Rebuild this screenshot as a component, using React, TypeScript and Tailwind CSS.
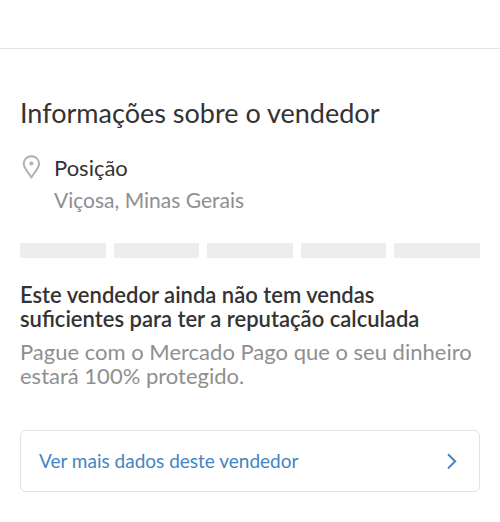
const levels = [1, 2, 3, 4, 5];

function PinIcon() {
  return (
    <svg
      className="mt-0.5 h-6 w-6 shrink-0 text-[#b0b0b0]"
      viewBox="0 0 24 24"
      fill="none"
      stroke="currentColor"
      strokeWidth="2"
      strokeLinejoin="round"
      aria-hidden="true"
    >
      <path d="M11.4 22.4 C9.2 18.4 3.7 13.4 3.7 8.6 A7.7 7.4 0 0 1 19.1 8.6 C19.1 13.4 13.6 18.4 11.4 22.4 Z" />
      <circle cx="11.4" cy="8.4" r="2" fill="currentColor" stroke="none" />
    </svg>
  );
}

function ChevronIcon() {
  return (
    <svg
      className="h-4 w-4 shrink-0"
      viewBox="0 0 16 16"
      fill="none"
      stroke="currentColor"
      strokeWidth="2"
      aria-hidden="true"
    >
      <path d="M5 1.2 L12.2 8.3 L5 15.4" />
    </svg>
  );
}

export default function App() {
  return (
    <div className="bg-white font-['Lato','Open_Sans',sans-serif] text-[#333333]">
      <header className="h-12" />
      <main className="border-t border-[#e4e4e4] px-5 pt-12 pb-7">
        <h1 className="text-[27px] leading-8">Informações sobre o vendedor</h1>

        <section className="mt-6 flex gap-2.5">
          <PinIcon />
          <div className="leading-8">
            <h2 className="-mt-px text-[22px]">Posição</h2>
            <p className="text-[21px] text-[#8f8f8f]">Viçosa, Minas Gerais</p>
          </div>
        </section>

        <div className="mt-[27px] grid grid-cols-5 gap-2">
          {levels.map((level) => (
            <div key={level} className="h-[15px] bg-[#ededed]" />
          ))}
        </div>

        <section className="mt-[25px] text-[22px] leading-6">
          <h2 className="font-semibold">
            Este vendedor ainda não tem vendas suficientes para ter a reputação calculada
          </h2>
          <p className="mt-[9px] text-[#8f8f8f]">
            Pague com o Mercado Pago que o seu dinheiro estará 100% protegido.
          </p>
        </section>

        <a
          href="#vendedor"
          className="mt-[42px] flex items-center justify-between rounded-md border border-[#e2e2e2] py-[18px] pr-5 pl-[18px] text-[19px] leading-6 text-[#4484c4]"
        >
          Ver mais dados deste vendedor
          <ChevronIcon />
        </a>
      </main>
    </div>
  );
}
